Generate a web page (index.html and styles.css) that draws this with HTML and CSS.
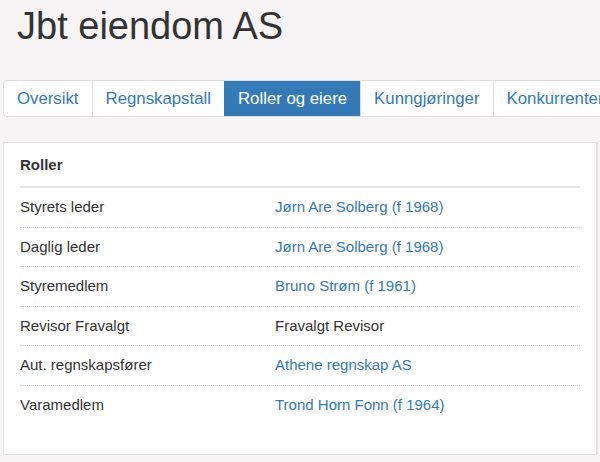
FILE: index.html
```html
<!DOCTYPE html>
<html lang="no">

<head>
    <meta charset="UTF-8">
    <title>Jbt eiendom AS</title>
    <link rel="stylesheet" href="styles.css">
</head>

<body>
    <h1 class="company-name">Jbt eiendom AS</h1>

    <ul class="tabs">
        <li><a href="#">Oversikt</a></li>
        <li><a href="#">Regnskapstall</a></li>
        <li class="active"><a href="#">Roller og eiere</a></li>
        <li><a href="#">Kunngjøringer</a></li>
        <li><a href="#">Konkurrenter</a></li>
    </ul>

    <div class="panel">
        <div class="panel-title">Roller</div>
        <div class="roles">
            <div class="role">
                <span>Styrets leder</span>
                <a href="#">Jørn Are Solberg (f 1968)</a>
            </div>
            <div class="role">
                <span>Daglig leder</span>
                <a href="#">Jørn Are Solberg (f 1968)</a>
            </div>
            <div class="role">
                <span>Styremedlem</span>
                <a href="#">Bruno Strøm (f 1961)</a>
            </div>
            <div class="role">
                <span>Revisor Fravalgt</span>
                <span>Fravalgt Revisor</span>
            </div>
            <div class="role">
                <span>Aut. regnskapsfører</span>
                <a href="#">Athene regnskap AS</a>
            </div>
            <div class="role">
                <span>Varamedlem</span>
                <a href="#">Trond Horn Fonn (f 1964)</a>
            </div>
        </div>
    </div>
</body>

</html>
```

FILE: styles.css
```css
body {
    margin: 0;
    padding: 0 3px;
    background: #f6f4f5;
    color: #333;
    font-family: "Liberation Sans", Arial, sans-serif;
    overflow: hidden;
}

a {
    color: #337ab7;
    text-decoration: none;
}

.company-name {
    margin: 0;
    padding: 4px 0 0 14px;
    height: 80px;
    box-sizing: border-box;
    font-size: 38px;
    font-weight: normal;
    line-height: 44px;
}

.tabs {
    display: flex;
    margin: 0;
    padding: 0;
    list-style: none;
    width: max-content;
    background: #fff;
    border: 1px solid #dedcdd;
    border-radius: 4px 0 0 4px;
}

.tabs li {
    border-left: 1px solid #dedcdd;
}

.tabs li:first-child {
    border-left: none;
}

.tabs a {
    display: block;
    padding: 7px 13px;
    font-size: 16.8px;
    line-height: 21px;
}

.tabs .active {
    background: #337ab7;
    border-left-color: #337ab7;
}

.tabs .active a {
    color: #fff;
}

.panel {
    margin-top: 25px;
    height: 313px;
    box-sizing: border-box;
    background: #fff;
    border: 1px solid #e2e0e1;
    box-shadow: 1px 1px 0 #e6e4e5;
    padding: 12px 16px 0 16px;
    font-size: 15px;
}

.panel-title {
    font-weight: bold;
    line-height: 20px;
    padding-bottom: 11px;
    border-bottom: 2px solid #e6e6e6;
}

.role {
    display: grid;
    grid-template-columns: 255px 1fr;
    padding: 10px 0;
    line-height: 18.5px;
    border-bottom: 1px dotted #cfcfcf;
}

.role:last-child {
    border-bottom: none;
}
```
